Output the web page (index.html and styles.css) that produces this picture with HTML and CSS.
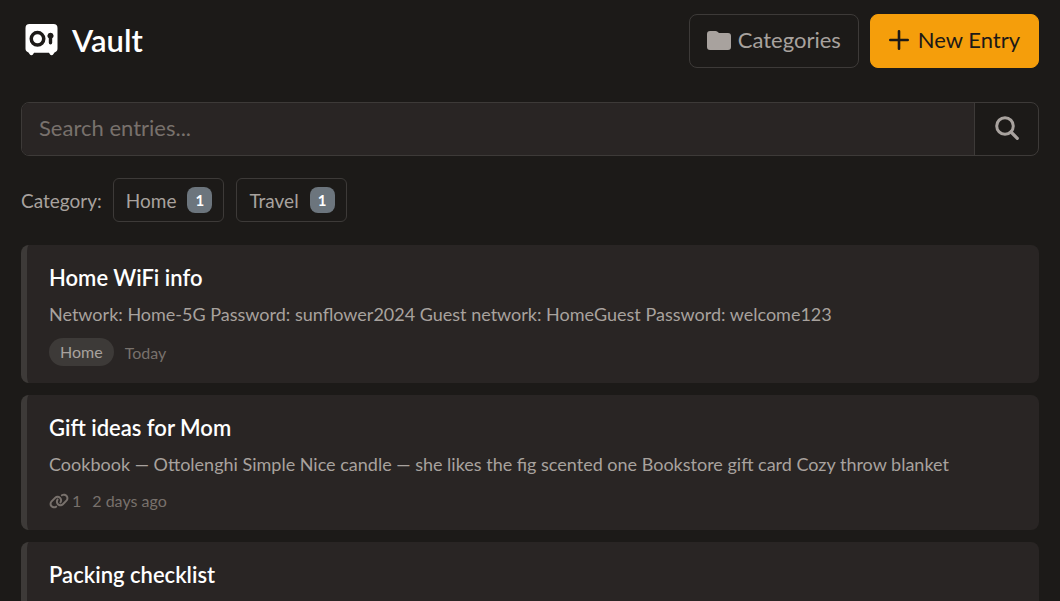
FILE: index.html
```html
<!DOCTYPE html>
<html lang="en">
<head>
<meta charset="utf-8">
<meta name="viewport" content="width=device-width, initial-scale=1">
<title>Vault</title>
<link rel="stylesheet" href="styles.css">
</head>
<body>
<div class="page">
  <header class="topbar">
    <h1 class="brand">
      <svg class="brand-icon" viewBox="0 0 34 32" aria-hidden="true">
        <path fill="currentColor" fill-rule="evenodd" d="M5.500 0H29.500a4 4 0 0 1 4 4V24.500a4 4 0 0 1-3 3.900L29.300 30.200a2 2 0 0 1-3.400 0L25 28.700H10L9.100 30.200a2 2 0 0 1-3.400 0L4.500 28.400A4 4 0 0 1 1.500 24.500V4A4 4 0 0 1 5.500 0ZM13.500 6.800a8 8 0 1 0 0 16a8 8 0 1 0 0-16ZM13.500 10.300a4.500 4.500 0 1 1 0 9a4.500 4.500 0 1 1 0-9ZM26.500 8.800a3 3 0 0 0-1.700 5.500V18.700a1.700 1.700 0 0 0 3.400 0V14.300A3 3 0 0 0 26.500 8.800Z"/>
      </svg>
      <span>Vault</span>
    </h1>
    <div class="actions">
      <button class="btn btn-outline" type="button">
        <svg class="folder-icon" viewBox="0 0 24 19" aria-hidden="true"><path fill="currentColor" d="M3 0H8.500a3 3 0 0 1 2 .8L12 2H21a3 3 0 0 1 3 3V16a3 3 0 0 1-3 3H3a3 3 0 0 1-3-3V3A3 3 0 0 1 3 0Z"/></svg>
        <span>Categories</span>
      </button>
      <button class="btn btn-primary" type="button">
        <svg class="plus-icon" viewBox="0 0 20 20" aria-hidden="true"><path d="M10 1.300V18.700M1.300 10H18.700" fill="none" stroke="currentColor" stroke-width="2.600" stroke-linecap="round"/></svg>
        <span>New Entry</span>
      </button>
    </div>
  </header>

  <form class="search" role="search">
    <input class="search-input" type="search" placeholder="Search entries..." aria-label="Search entries">
    <button class="search-btn" type="button" aria-label="Search">
      <svg class="search-icon" viewBox="0 0 24 24" aria-hidden="true"><circle cx="10" cy="10" r="8.300" fill="none" stroke="currentColor" stroke-width="3"/><path d="M16 16L22.300 22.300" stroke="currentColor" stroke-width="3.200" stroke-linecap="round"/></svg>
    </button>
  </form>

  <div class="filters">
    <span class="filters-label">Category:</span>
    <button class="chip" type="button">Home <span class="count">1</span></button>
    <button class="chip" type="button">Travel <span class="count">1</span></button>
  </div>

  <main class="entries">
    <article class="entry">
      <h2 class="entry-title">Home WiFi info</h2>
      <p class="entry-text">Network: Home-5G Password: sunflower2024 Guest network: HomeGuest Password: welcome123</p>
      <div class="meta"><span class="tag">Home</span><span>Today</span></div>
    </article>
    <article class="entry">
      <h2 class="entry-title">Gift ideas for Mom</h2>
      <p class="entry-text">Cookbook — Ottolenghi Simple Nice candle — she likes the fig scented one Bookstore gift card Cozy throw blanket</p>
      <div class="meta">
        <span class="links">
          <svg class="link-icon" viewBox="0 0 640 512" aria-hidden="true"><path fill="currentColor" d="M579.800 267.700c56.500-56.500 56.500-148 0-204.500c-50-50-128.800-56.500-186.300-15.400l-1.600 1.100c-14.400 10.300-17.700 30.300-7.400 44.600s30.300 17.700 44.600 7.400l1.600-1.100c32.100-22.900 76-19.300 103.800 8.600c31.500 31.500 31.500 82.500 0 114L422.300 334.800c-31.500 31.500-82.500 31.500-114 0c-27.900-27.900-31.500-71.800-8.600-103.800l1.100-1.600c10.300-14.400 6.900-34.400-7.400-44.600s-34.400-6.900-44.600 7.400l-1.100 1.600C206.500 251.200 213 330 263 380c56.500 56.500 148 56.500 204.500 0L579.800 267.700zM60.200 244.300c-56.500 56.500-56.500 148 0 204.500c50 50 128.800 56.500 186.300 15.400l1.600-1.100c14.400-10.300 17.700-30.300 7.400-44.600s-30.300-17.700-44.600-7.400l-1.600 1.100c-32.100 22.900-76 19.300-103.800-8.600C74 372 74 321 105.500 289.500L217.700 177.200c31.500-31.500 82.500-31.500 114 0c27.900 27.900 31.500 71.800 8.600 103.900l-1.100 1.600c-10.300 14.400-6.900 34.400 7.400 44.600s34.400 6.900 44.600-7.400l1.100-1.600C433.500 260.800 427 182 377 132c-56.500-56.500-148-56.500-204.500 0L60.200 244.300z"/></svg>
          <span>1</span>
        </span>
        <span>2 days ago</span>
      </div>
    </article>
    <article class="entry">
      <h2 class="entry-title">Packing checklist</h2>
    </article>
  </main>
</div>
</body>
</html>
```
FILE: styles.css
```css
* {
  box-sizing: border-box;
}

body {
  margin: 0;
  background: #1c1a18;
  color: #a8a29e;
  font-family: Lato, "Open Sans", sans-serif;
  overflow: hidden;
}

.page {
  padding: 14px 21px 0;
}

button,
input {
  font-family: inherit;
  color: inherit;
}

.topbar {
  display: flex;
  align-items: center;
  justify-content: space-between;
  margin-bottom: 34px;
}

.brand {
  display: flex;
  align-items: center;
  gap: 14px;
  margin: 0;
  padding: 0 0 2px 3px;
  color: #fff;
  font-size: 31px;
  line-height: 40px;
  font-weight: 600;
}

.brand-icon {
  width: 34px;
  height: 32px;
}

.actions {
  display: flex;
  gap: 11px;
}

.btn {
  display: flex;
  align-items: center;
  justify-content: center;
  height: 54px;
  gap: 7px;
  padding: 0 17px 2px;
  border: 1px solid #3d3a38;
  border-radius: 8px;
  background: transparent;
  font-size: 22px;
  line-height: 32px;
}

.btn-primary {
  gap: 9px;
  padding: 0 18px 2px;
  border-color: #f59e0b;
  background: #f59e0b;
  color: #1c1917;
}

.folder-icon {
  width: 24px;
  height: 19px;
}

.plus-icon {
  width: 20px;
  height: 20px;
}

.search {
  display: flex;
  height: 54px;
  margin-bottom: 22px;
  border: 1px solid #3d3a38;
  border-radius: 8px;
  overflow: hidden;
}

.search-input {
  flex: 1;
  min-width: 0;
  padding: 0 17px 3px;
  border: 0;
  outline: 0;
  background: #292524;
  font-size: 22px;
}

.search-input::placeholder {
  color: #78716c;
  opacity: 1;
}

.search-btn {
  display: grid;
  place-items: center;
  width: 64px;
  padding: 0 0 2px;
  border: 0;
  border-left: 1px solid #3d3a38;
  background: transparent;
}

.search-icon {
  width: 24px;
  height: 24px;
}

.filters {
  display: flex;
  align-items: center;
  gap: 12px;
  margin-bottom: 23px;
  font-size: 19px;
}

.filters-label {
  margin-right: -1px;
}

.chip {
  display: flex;
  align-items: center;
  gap: 11px;
  height: 44px;
  padding: 0 11px 0 12px;
  border: 1px solid #3d3a38;
  border-radius: 6px;
  background: transparent;
  font-size: 19px;
}

.count {
  min-width: 25px;
  border-radius: 8px;
  background: #6c757d;
  color: #fff;
  font-size: 15px;
  line-height: 26px;
  font-weight: 700;
  text-align: center;
}

.entries {
  display: grid;
  gap: 12px;
}

.entry {
  padding: 17px 22px;
  border-left: 6px solid #3d3a38;
  border-radius: 8px;
  background: #292524;
}

.entry-title {
  margin: 0 0 6px;
  color: #fff;
  font-size: 22px;
  line-height: 32px;
  font-weight: 600;
}

.entry-text {
  margin: 0 0 10px;
  font-size: 18px;
  line-height: 28px;
}

.meta {
  display: flex;
  align-items: center;
  gap: 11px;
  color: #78716c;
  font-size: 16px;
  line-height: 25px;
}

.tag {
  padding: 0 11px;
  border-radius: 14px;
  background: #3d3a38;
  color: #a8a29e;
  line-height: 28px;
}

.links {
  display: flex;
  align-items: center;
  gap: 3px;
}

.link-icon {
  width: 20px;
  height: 16px;
}
```
